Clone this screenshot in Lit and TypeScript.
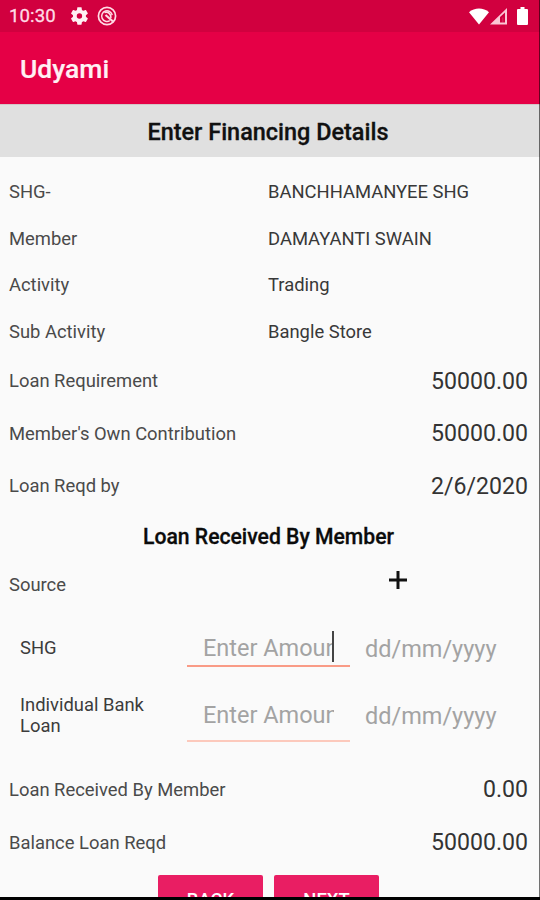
import { LitElement, html, css, svg } from "lit";
import { customElement } from "lit/decorators.js";

const gear = svg`<path fill-rule="evenodd" d="M19.14 12.94c.04-.3.06-.61.06-.94 0-.32-.02-.64-.07-.94l2.03-1.58c.18-.14.23-.41.12-.61l-1.92-3.32c-.12-.22-.37-.29-.59-.22l-2.39.96c-.5-.38-1.03-.7-1.62-.94l-.36-2.54c-.04-.24-.24-.41-.48-.41h-3.84c-.24 0-.43.17-.47.41l-.36 2.54c-.59.24-1.13.57-1.62.94l-2.39-.96c-.22-.08-.47 0-.59.22L2.74 8.87c-.12.21-.08.47.12.61l2.03 1.58c-.05.3-.09.63-.09.94s.02.64.07.94l-2.03 1.58c-.18.14-.23.41-.12.61l1.92 3.32c.12.22.37.29.59.22l2.39-.96c.5.38 1.03.7 1.62.94l.36 2.54c.05.24.24.41.48.41h3.84c.24 0 .44-.17.47-.41l.36-2.54c.59-.24 1.13-.56 1.62-.94l2.39.96c.22.08.47 0 .59-.22l1.92-3.32c.12-.22.07-.47-.12-.61l-2.01-1.58zM12 15a3 3 0 1 1 0-6 3 3 0 0 1 0 6z"/>`;

@customElement("status-bar")
class StatusBar extends LitElement {
  static styles = css`
    :host { display: flex; flex: none; align-items: center; height: 32px; box-sizing: border-box; padding: 0 12px 0 9px; background: #d1003f; color: #ffdbe5; font-size: 18.6px; }
    .time { width: 61px; letter-spacing: 0.1px; -webkit-text-stroke: 0.3px; }
    svg { display: block; fill: currentColor; }
    .gear { margin: 0 9px 0 0; color: #fff0f3; }
    .grow { flex: 1; }
    .wifi, .battery { color: #fff; }
    .cell { margin: 0 9px 0 1px; }
  `;
  render() {
    return html`
      <span class="time">10:30</span>
      <svg class="gear" width="18" height="18" viewBox="1.500 2 20 20">${gear}</svg>
      <svg width="20" height="20" viewBox="0 0 20 20">
        <circle cx="10" cy="10" r="8.600" fill="none" stroke="currentColor" stroke-width="1.700" />
        <path d="M12.800 14.600A5.300 5.300 0 1 1 15.200 9.200" fill="none" stroke="currentColor" stroke-width="1.500" />
        <path d="M8.500 9 L16 15.500" fill="none" stroke="currentColor" stroke-width="2.200" />
        <path d="M7.500 6.500a4.800 4.800 0 0 1 6.300 5.500" fill="none" stroke="currentColor" stroke-width="1.800" />
      </svg>
      <span class="grow"></span>
      <svg class="wifi" width="20" height="17" viewBox="0 0 20 17"><path d="M0 4.200C5.500-.6 14.500-.6 20 4.200L10 16.500z" /></svg>
      <svg class="cell" width="18" height="17" viewBox="0 0 18 17">
        <path fill-rule="evenodd" d="M0 16.500 17 0v16.500zM10 9v5.500h5V4.500z" opacity=".9" />
        <path d="M12 9.500h1.500v5H12z" opacity=".15" />
      </svg>
      <svg class="battery" width="11" height="18" viewBox="0 0 11 18"><path d="M3.500 0h4v2H10a1 1 0 0 1 1 1v14a1 1 0 0 1-1 1H1a1 1 0 0 1-1-1V3a1 1 0 0 1 1-1h2.500z" /></svg>
    `;
  }
}

@customElement("loan-entry")
class LoanEntry extends LitElement {
  static properties = { label: {}, active: { type: Boolean } };
  declare label: string;
  declare active: boolean;
  static styles = css`
    :host { display: grid; grid-template-columns: 167px 163px 1fr; align-items: center; padding-left: 20px; }
    .name { width: 140px; font-size: 18.4px; line-height: 21.500px; color: #3c3c3c; margin-bottom: 2px; }
    .field { align-self: stretch; display: flex; align-items: center; padding: 0 16px; border-bottom: 2px solid #fcc9bc; position: relative; }
    .field.active { border-color: #f99b86; }
    .hint { flex: 1; overflow: hidden; white-space: nowrap; font-size: 23.500px; color: #a3a3a3; }
    .date { padding: 0 0 1px 15px; font-size: 23.500px; color: #a3a3a3; }
    .caret { position: absolute; right: 16px; top: 50%; width: 2px; height: 31px; margin-top: -17px; background: #444; }
  `;
  render() {
    return html`
      <span class="name">${this.label}</span>
      <div class="field ${this.active ? "active" : ""}">
        <span class="hint">Enter Amount</span>
        ${this.active ? html`<span class="caret"></span>` : ""}
      </div>
      <span class="date">dd/mm/yyyy</span>
    `;
  }
}

@customElement("app-root")
class AppRoot extends LitElement {
  static styles = css`
    :host { display: flex; flex-direction: column; box-sizing: border-box; width: 540px; height: 900px; overflow: hidden; background: #fafafa; border-bottom: 3px solid #000; font-family: Roboto, sans-serif; position: relative; }
    .edge { position: absolute; right: 0; top: 0; bottom: 0; width: 1px; background: rgba(0, 0, 0, 0.55); }
    .appbar { height: 72px; flex: none; display: flex; align-items: center; padding-left: 20px; background: #e50046; color: #fff0f4; font-size: 26.500px; font-weight: 500; -webkit-text-stroke: 0.200px; box-sizing: border-box; padding-top: 1px; }
    .title { height: 53px; box-sizing: border-box; flex: none; display: flex; align-items: center; justify-content: center; background: #e0e0e0; border-top: 1px solid #d3c6c8; color: #111; font-size: 23.450px; font-weight: 500; padding: 1px 4px 0 0; -webkit-text-stroke: 0.300px; }
    .details, .totals, .actions { flex: none; }
    .details { padding-top: 11.750px; }
    .row { flex: none; display: flex; align-items: center; padding: 0 12px 0 9px; font-size: 18.400px; color: #4a4a4a; height: 52.500px; box-sizing: border-box; }
    .row.info { height: 46.500px; }
    .details .key, .details .text { padding-bottom: 1px; }
    .info .key { width: 259px; }
    .info .text { color: #383838; }
    .amount { margin-left: auto; font-size: 23.100px; color: #333; }
    .section { flex: none; height: 49.500px; display: flex; align-items: center; justify-content: center; color: #0b0b0b; font-size: 21.150px; font-weight: 500; padding: 0 3px 1px 0; box-sizing: border-box; -webkit-text-stroke: 0.300px; }
    .row.source { height: 46px; }
    .source svg { margin: -9px 0 0 322px; }
    .source .key { width: 58px; }
    .first { height: 36px; margin-top: 23.250px; }
    .second { height: 52px; margin-top: 23px; }
    .first, .second { flex: none; }
    .totals { padding-top: 21.500px; }
    .actions { display: flex; gap: 11px; padding: 6.500px 0 0 158px; }
    .button { width: 105px; height: 48px; flex: none; box-sizing: border-box; border-radius: 2px; background: #e91e63; color: #fff; font-size: 18.400px; font-weight: 500; line-height: 49px; text-align: center; }
  `;
  render() {
    const info = [
      ["SHG-", "BANCHHAMANYEE SHG"],
      ["Member", "DAMAYANTI SWAIN"],
      ["Activity", "Trading"],
      ["Sub Activity", "Bangle Store"],
    ];
    const loan = [
      ["Loan Requirement", "50000.00"],
      ["Member's Own Contribution", "50000.00"],
      ["Loan Reqd by", "2/6/2020"],
    ];
    const totals = [
      ["Loan Received By Member", "0.00"],
      ["Balance Loan Reqd", "50000.00"],
    ];
    const amountRow = ([key, value]: string[]) =>
      html`<div class="row"><span class="key">${key}</span><span class="amount">${value}</span></div>`;
    return html`
      <status-bar></status-bar>
      <div class="appbar">Udyami</div>
      <div class="title">Enter Financing Details</div>
      <div class="details">
        ${info.map(([key, value]) => html`<div class="row info"><span class="key">${key}</span><span class="text">${value}</span></div>`)}
        ${loan.map(amountRow)}
      </div>
      <div class="section">Loan Received By Member</div>
      <div class="row source">
        <span class="key">Source</span>
        <svg width="18" height="18" viewBox="0 0 18 18"><path d="M9 0v18M0 9h18" stroke="#111" stroke-width="3" /></svg>
      </div>
      <loan-entry class="first" label="SHG" active></loan-entry>
      <loan-entry class="second" label="Individual Bank Loan"></loan-entry>
      <div class="totals">${totals.map(amountRow)}</div>
      <div class="actions"><div class="button">BACK</div><div class="button">NEXT</div></div>
      <div class="edge"></div>
    `;
  }
}
